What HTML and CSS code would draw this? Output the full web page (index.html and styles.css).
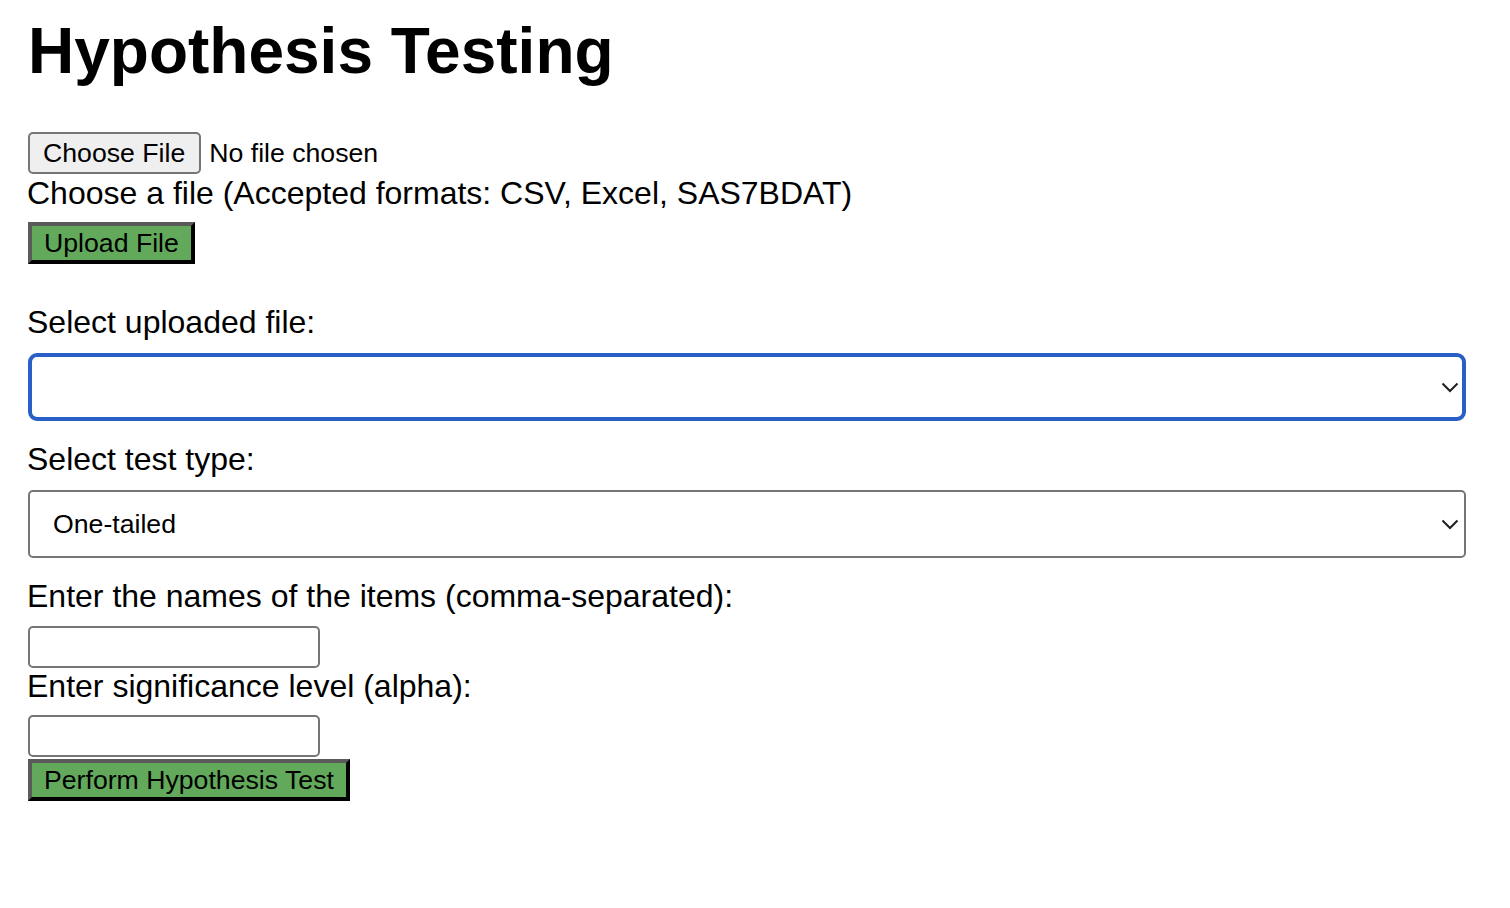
FILE: index.html
```html
<!DOCTYPE html>
<html lang="en">
<head>
<meta charset="utf-8">
<title>Hypothesis Testing</title>
<link rel="stylesheet" href="styles.css">
</head>
<body>
<main class="page">
  <h1 class="title">Hypothesis Testing</h1>

  <form class="upload-form">
    <div class="file-row">
      <span class="file-btn">Choose File</span>
      <span class="file-status">No file chosen</span>
    </div>
    <p class="hint">Choose a file (Accepted formats: CSV, Excel, SAS7BDAT)</p>
    <button type="button" class="action-btn action-upload">Upload File</button>
  </form>

  <form class="test-form">
    <label class="field-label label-first">Select uploaded file:</label>
    <div class="select-wrap">
      <div class="select select-focus"></div>
      <svg class="chevron" width="18" height="11" viewBox="0 0 18 11"><path d="M1.5 1.5 L9 9 L16.5 1.5" fill="none" stroke="#1f1f1f" stroke-width="2"/></svg>
    </div>

    <label class="field-label">Select test type:</label>
    <div class="select-wrap">
      <div class="select">One-tailed</div>
      <svg class="chevron" width="18" height="11" viewBox="0 0 18 11"><path d="M1.5 1.5 L9 9 L16.5 1.5" fill="none" stroke="#1f1f1f" stroke-width="2"/></svg>
    </div>

    <label class="field-label">Enter the names of the items (comma-separated):</label>
    <input class="text-input" type="text">
    <label class="field-label label-tight">Enter significance level (alpha):</label>
    <input class="text-input" type="text">
    <button type="button" class="action-btn action-submit">Perform Hypothesis Test</button>
  </form>
</main>
</body>
</html>
```

FILE: styles.css
```css
* {
  box-sizing: border-box;
}

html, body {
  margin: 0;
  padding: 0;
  background: #ffffff;
}

body {
  font-family: "Liberation Sans", Arial, sans-serif;
  color: #000000;
}

.page {
  padding: 14px 44px 0 28px;
  display: flex;
  flex-direction: column;
}

.title {
  margin: 0;
  font-size: 64px;
  font-weight: bold;
  line-height: 74px;
}

.upload-form {
  display: flex;
  flex-direction: column;
  align-items: flex-start;
  margin-top: 44px;
}

.file-row {
  display: flex;
  align-items: center;
  gap: 8px;
  height: 42px;
}

.file-btn {
  display: flex;
  align-items: center;
  height: 42px;
  padding: 0 14px 0 13px;
  border: 2px solid #767676;
  border-radius: 5px;
  background: #efefef;
  font-size: 26.67px;
  color: #000;
}

.file-status {
  font-size: 26.67px;
}

.hint {
  margin: 1px 0 0 -1px;
  font-size: 32px;
  line-height: 37px;
}

.action-btn {
  height: 42px;
  margin-top: 13px;
  padding: 0 12px;
  border: 4px solid #5a5a5a;
  border-right-color: #000;
  border-bottom-color: #000;
  background: #63a95c;
  font-family: "Liberation Sans", Arial, sans-serif;
  font-size: 26.67px;
  color: #000;
  line-height: 30px;
}

.action-upload {
  margin-top: 10px;
}

.test-form {
  display: flex;
  flex-direction: column;
  align-items: flex-start;
}

.field-label {
  display: block;
  font-size: 32px;
  line-height: 37px;
  margin-top: 20px;
  margin-bottom: 12px;
  margin-left: -1px;
}

.label-first {
  margin-top: 40px;
}

.label-tight {
  margin-top: 0;
  margin-bottom: 11px;
}

.select-wrap {
  position: relative;
  width: 100%;
}

.select {
  width: 100%;
  height: 68px;
  border: 2px solid #767676;
  border-radius: 5px;
  background: #fff;
  padding: 0 24px 0 23px;
  display: flex;
  align-items: center;
  font-size: 26.67px;
}

.select-focus {
  border: 4px solid #2b5fc8;
  border-radius: 9px;
}

.chevron {
  position: absolute;
  right: 7px;
  top: 29px;
}

.text-input {
  width: 292px;
  height: 42px;
  margin: 0;
  border: 2px solid #767676;
  border-radius: 5px;
  background: #fff;
  font-size: 26.67px;
}

.field-label + .text-input {
  margin-top: -1px;
}

.action-submit {
  margin-top: 2px;
}
```
